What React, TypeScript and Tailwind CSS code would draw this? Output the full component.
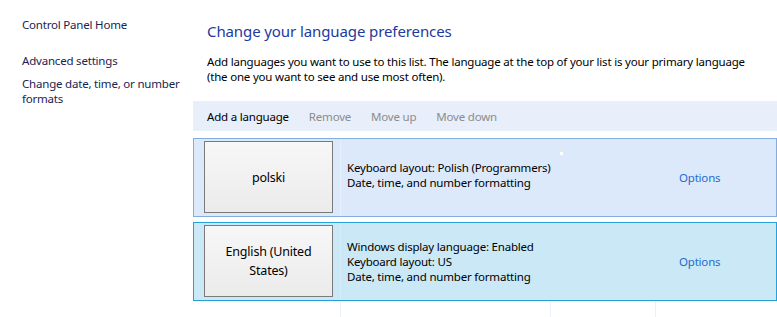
export default function App() {
  const font = { fontFamily: '"Segoe UI", "Noto Sans", sans-serif' };
  return (
    <div
      className="w-[777px] h-[317px] bg-white flex overflow-hidden text-[11.5px] leading-[15px] tracking-[-0.2px] text-black relative"
      style={font}
    >
      {/* left pane */}
      <div className="w-[193px] shrink-0 pl-[22px] pt-[17px] text-[#1a2451]">
        <div>Control Panel Home</div>
        <div className="mt-[21px]">Advanced settings</div>
        <div className="mt-[8px] w-[166px]">Change date, time, or number formats</div>
      </div>

      {/* main */}
      <div className="flex-1 flex flex-col">
        <h1 className="pl-[14px] pt-[21px] text-[15px] leading-[20px] tracking-[-0.1px] text-[#1e3a9e]">
          Change your language preferences
        </h1>
        <p className="pl-[14px] pt-[13px] pr-[10px]">
          Add languages you want to use to this list. The language at the top of your list is your primary language (the one you want to see and use most often).
        </p>

        <div className="mt-[17px] h-[30px] shrink-0 bg-[#e8eefa] flex items-center pl-[14px] gap-[20px]">
          <span>Add a language</span>
          <span className="text-[#8c8c8c]">Remove</span>
          <span className="text-[#8c8c8c]">Move up</span>
          <span className="text-[#8c8c8c]">Move down</span>
        </div>

        <div className="mt-[7px] flex flex-col gap-[5px]">
          <LangRow name="polski" lines={["Keyboard layout: Polish (Programmers)", "Date, time, and number formatting"]} selected={false} />
          <LangRow
            name="English (United States)"
            lines={["Windows display language: Enabled", "Keyboard layout: US", "Date, time, and number formatting"]}
            selected
          />
        </div>

        <div className="flex-1 flex pl-[147px]">
          <div className="w-[210px] border-l border-[#edf2f9]" />
          <div className="w-[105px] border-l border-[#edf2f9]" />
          <div className="flex-1 border-l border-[#edf2f9]" />
        </div>
      </div>

      <div className="absolute left-[560px] top-[152px] w-[3px] h-[3px] bg-white" />
    </div>
  );
}

function LangRow({ name, lines, selected }: { name: string; lines: string[]; selected: boolean }) {
  return (
    <div
      className={
        selected
          ? "h-[79px] shrink-0 flex border border-[#26a0da] bg-[#cbe8f6]"
          : "h-[79px] shrink-0 flex border border-[#84acdd] bg-[#dce9fb]"
      }
    >
      <div className="w-[146px] shrink-0 pl-[10px] pt-[2px]">
        <div className="w-[129px] h-[72px] border border-[#7a7a7a] bg-gradient-to-b from-[#f7f7f7] to-[#ebebeb] flex items-center justify-center text-center text-[12.5px] leading-[19px] px-[8px]">
          {name}
        </div>
      </div>
      <div
        className={
          selected
            ? "flex-1 border-l border-[#d6ecf8] pl-[6px] flex flex-col justify-center"
            : "flex-1 border-l border-[#e6effc] pl-[6px] pb-[5px] flex flex-col justify-center"
        }
      >
        {lines.map((l) => (
          <div key={l}>{l}</div>
        ))}
      </div>
      <div className="w-[97px] flex items-center text-[#1e6bcf]">Options</div>
    </div>
  );
}
